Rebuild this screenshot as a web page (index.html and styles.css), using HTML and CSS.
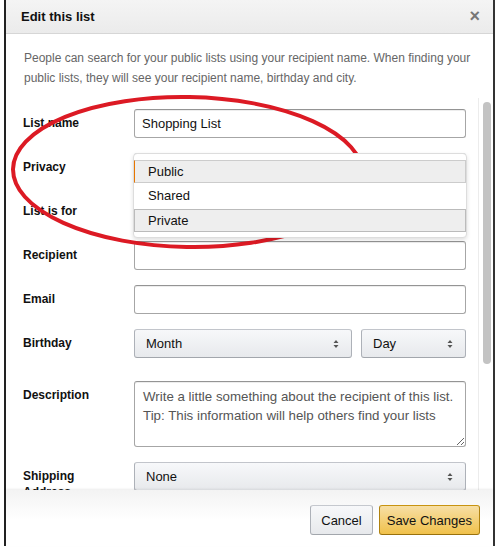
FILE: index.html
```html
<!DOCTYPE html>
<html lang="en">
<head>
<meta charset="UTF-8" />
<meta name="viewport" content="width=device-width, initial-scale=1" />
<title>Edit this list</title>
<link rel="stylesheet" href="styles.css">
</head>
<body>

<div class="modal">
  <div class="modal-header">
    <h4>Edit this list</h4>
    <span class="close">&times;</span>
  </div>

  <p class="intro">People can search for your public lists using your recipient name. When finding your public lists, they will see your recipient name, birthday and city.</p>

  <div class="scroll-area">
    <form class="list-form">
      <label>List name</label>
      <div class="field"><input type="text" value="Shopping List" /></div>

      <label>Privacy</label>
      <div class="field privacy">
        <div class="select"></div>
        <!-- open privacy menu -->
        <ul class="dropdown">
          <li class="selected">Public</li>
          <li>Shared</li>
          <li class="hovered">Private</li>
        </ul>
      </div>

      <label>List is for</label>
      <div class="field"><div class="select"></div></div>

      <label>Recipient</label>
      <div class="field"><input type="text" /></div>

      <label>Email</label>
      <div class="field"><input type="text" /></div>

      <label>Birthday</label>
      <div class="field birthday">
        <div class="select month">
          <span>Month</span>
          <svg class="arrows" width="6" height="10" viewBox="0 0 6 10"><path d="M3 1 L5.5 4 H0.5 Z M3 9 L5.5 6 H0.5 Z" fill="#555"/></svg>
        </div>
        <div class="select day">
          <span>Day</span>
          <svg class="arrows" width="6" height="10" viewBox="0 0 6 10"><path d="M3 1 L5.5 4 H0.5 Z M3 9 L5.5 6 H0.5 Z" fill="#555"/></svg>
        </div>
      </div>

      <label class="spaced">Description</label>
      <div class="field spaced">
        <textarea>Write a little something about the recipient of this list. Tip: This information will help others find your lists</textarea>
      </div>

      <label>Shipping Address</label>
      <div class="field">
        <div class="select">
          <span>None</span>
          <svg class="arrows" width="6" height="10" viewBox="0 0 6 10"><path d="M3 1 L5.5 4 H0.5 Z M3 9 L5.5 6 H0.5 Z" fill="#555"/></svg>
        </div>
      </div>
    </form>

    <div class="scrollbar"><div class="thumb"></div></div>
  </div>

  <div class="modal-footer">
    <button class="btn">Cancel</button>
    <button class="btn btn-primary">Save Changes</button>
  </div>
</div>

<!-- red marker circle drawn over the screenshot -->
<svg class="marker" width="500" height="549" viewBox="0 0 500 549">
  <ellipse cx="188" cy="172" rx="175" ry="75" transform="rotate(1 188 172)" fill="none" stroke="#dc1a24" stroke-width="4"/>
</svg>

</body>
</html>
```

FILE: styles.css
```css
body {
  margin: 0;
  background: #fff;
  font-family: 'Liberation Sans', Arial, sans-serif;
  color: #111;
  position: relative;
  height: 549px;
  overflow: hidden;
}
.modal {
  margin-left: 4px;
  width: 487px;
  height: 546px;
  border-left: 2px solid #222;
  border-right: 2px solid #333;
  display: flex;
  flex-direction: column;
}
.modal-header {
  height: 33px;
  background: linear-gradient(#f4f4f4, #ebebeb);
  border-bottom: 1px solid #d6d6d6;
  display: flex; align-items: center; justify-content: space-between;
  padding: 0 13px 0 15px;
}
.modal-header h4 {
  margin: 0;
  font-size: 13px;
  font-weight: 700;
}
.close {
  font-size: 18px;
  font-weight: 700;
  color: #777;
}
.intro {
  margin: 0;
  padding: 14px 6px 10px 18px;
  font-size: 12px;
  line-height: 20px;
  color: #666;
}
.scroll-area {
  height: 392px;
  display: flex;
  overflow: hidden;
}
.list-form {
  flex: 1;
  display: grid;
  grid-template-columns: 111px 332px;
  row-gap: 15px;
  align-content: start;
  padding: 11px 0 0 17px;
}
.list-form label {
  font-size: 12px;
  font-weight: 700;
  line-height: 16px;
  padding-top: 6px;
  padding-right: 40px;
}
.list-form .spaced {
  margin-top: 8px;
}
.field {
  position: relative;
}
input, textarea {
  box-sizing: border-box;
  width: 100%;
  border: 1px solid #a6a6a6;
  border-top-color: #949494;
  border-radius: 3px;
  box-shadow: 0 1px 0 rgba(255,255,255,.5), 0 1px 0 rgba(0,0,0,.07) inset;
  font-family: inherit;
  font-size: 13px;
  color: #111;
  margin: 0;
}
input {
  height: 29px;
  padding: 0 7px;
}
textarea {
  height: 66px;
  padding: 5px 8px;
  font-size: 13.3px;
  line-height: 19px;
  color: #555;
  resize: vertical;
  display: block;
}
.select {
  box-sizing: border-box;
  height: 29px;
  border: 1px solid #adb1b8;
  border-top-color: #c2c5cb;
  border-bottom-color: #a2a6ac;
  border-radius: 3px;
  background: linear-gradient(#f7f8fa, #e7e9ec);
  display: flex; align-items: center; justify-content: space-between;
  padding: 0 12px 0 11px;
  font-size: 13px;
}
.birthday {
  display: flex;
  gap: 9px;
}
.month { width: 218px; }
.day { flex: 1; }
.dropdown {
  position: absolute;
  z-index: 2;
  top: 0; left: -1px; right: -1px;
  height: 85px;
  box-sizing: border-box;
  margin: 0;
  padding: 6px 0 0;
  list-style: none;
  background: #fff;
  border: 1px solid #ddd;
  border-radius: 4px;
  box-shadow: 0 2px 4px rgba(0,0,0,.13);
  font-size: 13px;
}
.dropdown li {
  height: 24px;
  line-height: 24px;
  padding-left: 13px;
  border: 1px solid transparent;
}
.dropdown .selected {
  background: #eee;
  border-color: #ccc;
  border-left-color: #e77600;
  height: 21px;
  line-height: 21px;
}
.dropdown .hovered {
  background: #eee;
  border-color: #bbb;
  height: 21px;
  line-height: 21px;
}
.scrollbar {
  width: 15px;
  border-left: 1px solid #ececec;
  box-sizing: border-box;
  padding: 4px 0 0 4px;
}
.thumb {
  width: 8px;
  height: 262px;
  background: #c3c3c3;
  border-radius: 4px;
}
.modal-footer {
  flex: 1;
  background: linear-gradient(#f3f3f3, #fff 30px);
  box-shadow: 0 -1px 2px rgba(0,0,0,.08);
  display: flex; justify-content: flex-end; align-items: flex-start;
  gap: 6px;
  padding: 15px 13px 0 0;
  position: relative;
}
.btn {
  height: 30px;
  padding: 0 10px;
  border: 1px solid #adb1b8;
  border-top-color: #c5c8ce;
  border-bottom-color: #a2a6ac;
  border-radius: 3px;
  background: linear-gradient(#f7f8fa, #e7e9ec);
  font-family: inherit;
  font-size: 13px;
  color: #111;
  cursor: pointer;
}
.btn-primary {
  padding: 0 7px;
  border-color: #c89411 #b0820f #99710d;
  background: linear-gradient(#f7dfa5, #f0c14b);
}
.marker {
  position: absolute;
  top: 0; left: 0;
  pointer-events: none;
}
```
